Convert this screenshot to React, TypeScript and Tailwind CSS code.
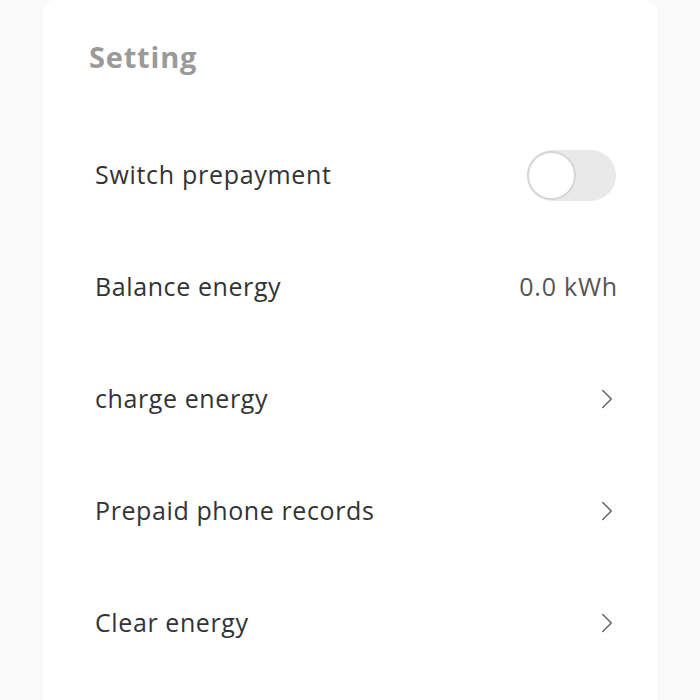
import { ChevronRight } from 'lucide-react'

const rows = [
  { label: 'Balance energy', value: '0.0 kWh' },
  { label: 'charge energy' },
  { label: 'Prepaid phone records' },
  { label: 'Clear energy' },
]

function Toggle() {
  return (
    <div className="flex h-[51px] w-[89px] items-center rounded-full bg-[#e9e9e9]">
      <div className="h-[49px] w-[49px] rounded-full border-2 border-[#d6d6d6] bg-white" />
    </div>
  )
}

export default function App() {
  return (
    <div
      className="flex h-[700px] w-[700px] justify-center bg-[#f9f9f9]"
      style={{ fontFamily: '"Open Sans", "Noto Sans", sans-serif' }}
    >
      <div className="flex w-[614px] flex-col rounded-t-xl bg-white pl-[46px] pr-[41px] pt-[38px]">
        <h1 className="text-[29px] font-bold leading-[38px] tracking-[0.8px] text-[#9a9a9a]">Setting</h1>
        <div className="mt-[73px] flex h-[52px] items-center justify-between pl-[6px]">
          <span className="text-[25px] tracking-[0.7px] text-[#333]">Switch prepayment</span>
          <Toggle />
        </div>
        {rows.map((row) => (
          <div key={row.label} className="mt-[60px] flex h-[52px] items-center justify-between pl-[6px]">
            <span className="text-[25px] tracking-[0.6px] text-[#333]">{row.label}</span>
            {row.value ? (
              <span className="mr-[-2px] text-[25px] tracking-[0.8px] text-[#555]">{row.value}</span>
            ) : (
              <ChevronRight size={34} strokeWidth={1.1} className="mr-[-8px] text-[#666]" />
            )}
          </div>
        ))}
      </div>
    </div>
  )
}
